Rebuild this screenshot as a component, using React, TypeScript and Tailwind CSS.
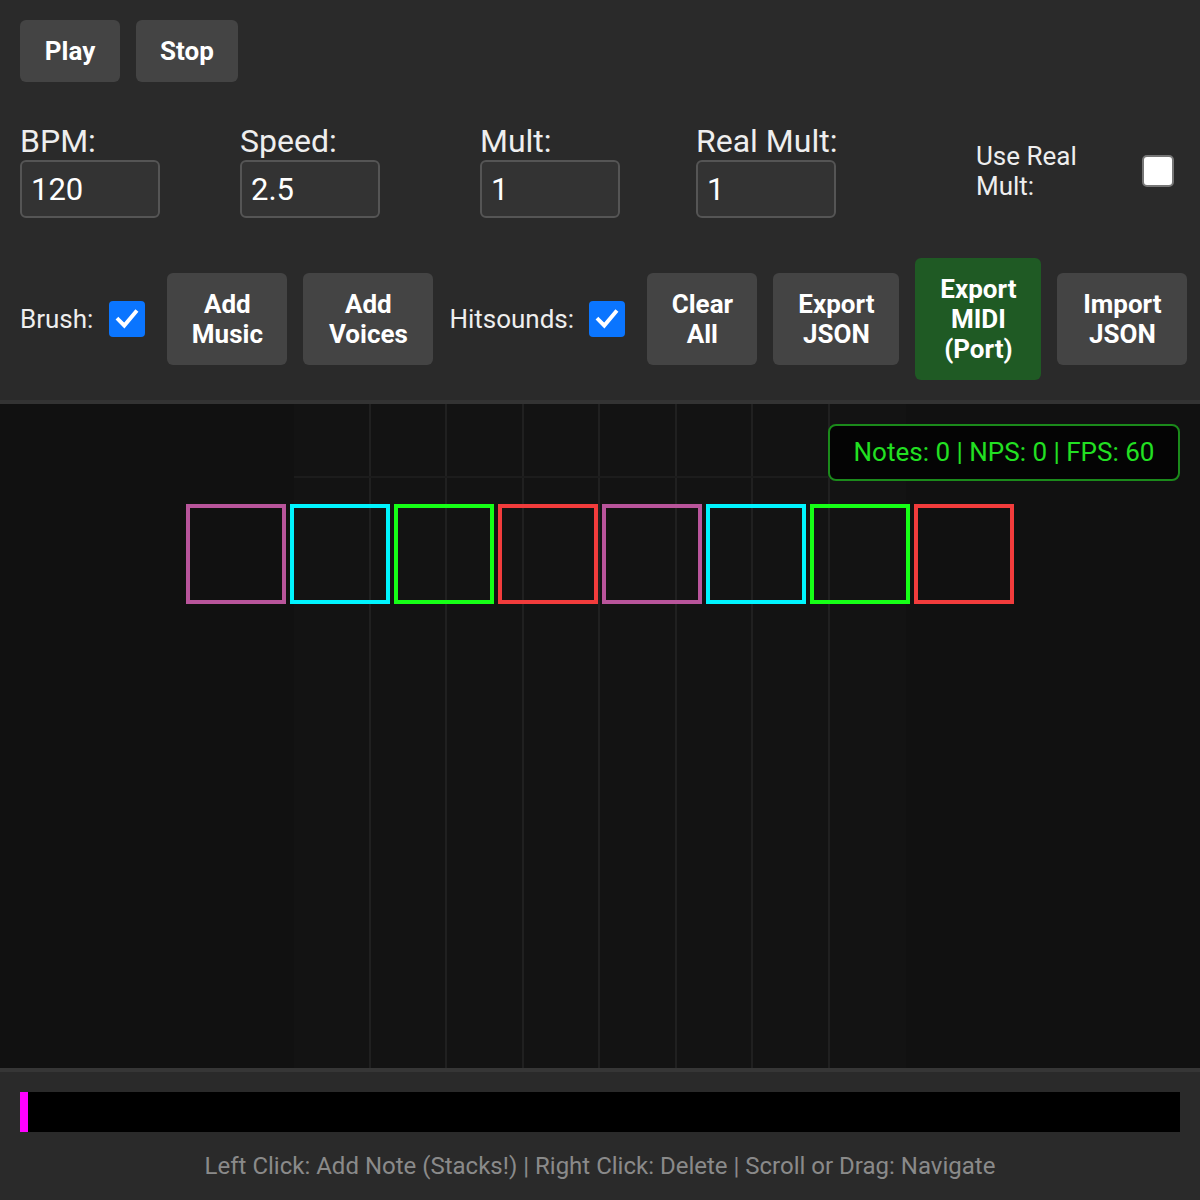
import React from "react";

const FONT = { fontFamily: "Roboto, 'Liberation Sans', sans-serif" };

const noteColors = ["#b9559b", "#00f5ff", "#16ff16", "#f23c3c", "#b9559b", "#00f5ff", "#16ff16", "#f23c3c"];

function CheckBox({ checked }: { checked: boolean }) {
  if (!checked) {
    return <div className="h-8 w-8 shrink-0 rounded-[5px] border-2 border-[#767676] bg-white" />;
  }
  return (
    <div className="mr-[6px] flex h-9 w-9 shrink-0 items-center justify-center rounded-[4px] bg-[#0a75ff]">
      <svg width="26" height="26" viewBox="0 0 24 24">
        <path d="M4 12.5 L9.5 18 L20 5.5" fill="none" stroke="white" strokeWidth="3.6" strokeLinecap="square" />
      </svg>
    </div>
  );
}

function Btn({ lines, width, green }: { lines: string[]; width: string; green?: boolean }) {
  return (
    <button
      className={
        (green ? "bg-[#1f5a24] " : "bg-[#444444] ") +
        width +
        " shrink-0 rounded-[6px] py-4 text-center text-[26px] font-bold leading-[30px] text-white"
      }
    >
      {lines.map((l) => (
        <span key={l} className="block whitespace-nowrap">
          {l}
        </span>
      ))}
    </button>
  );
}

function Field({ label, value, width }: { label: string; value: string; width: string }) {
  return (
    <div className={"flex shrink-0 flex-col " + width}>
      <label className="whitespace-nowrap text-[32px] leading-[38px] text-[#eeeeee]">{label}</label>
      <input
        readOnly
        value={value}
        className="h-[58px] w-[140px] rounded-[6px] border-2 border-[#555555] bg-[#333333] px-[9px] text-[31px] text-white outline-none"
      />
    </div>
  );
}

export default function App() {
  return (
    <div className="flex h-[1200px] w-[1200px] flex-col bg-[#111111]" style={FONT}>
      {/* controls */}
      <div className="flex h-[404px] shrink-0 flex-col gap-10 border-b-4 border-[#333333] bg-[#2a2a2a] p-5">
        <div className="flex gap-4">
          <button className="w-[100px] rounded-[6px] bg-[#444444] py-4 text-[26px] font-bold leading-[30px] text-white">Play</button>
          <button className="w-[102px] rounded-[6px] bg-[#444444] py-4 text-[26px] font-bold leading-[30px] text-white">Stop</button>
        </div>

        <div className="flex items-start">
          <Field label="BPM:" value="120" width="w-[220px]" />
          <Field label="Speed:" value="2.5" width="w-[240px]" />
          <Field label="Mult:" value="1" width="w-[216px]" />
          <Field label="Real Mult:" value="1" width="w-[280px]" />
          <div className="flex flex-1 items-center justify-between self-center pr-[6px] pt-[2px]">
            <span className="w-[120px] text-[26px] leading-[30px] text-[#eeeeee]">Use Real Mult:</span>
            <CheckBox checked={false} />
          </div>
        </div>

        <div className="flex items-center gap-4">
          <span className="w-[74px] text-[26px] text-[#eeeeee]">Brush:</span>
          <CheckBox checked />
          <Btn lines={["Add", "Music"]} width="w-[120px]" />
          <Btn lines={["Add", "Voices"]} width="w-[130px]" />
          <span className="w-[124px] text-[26px] text-[#eeeeee]">Hitsounds:</span>
          <CheckBox checked />
          <Btn lines={["Clear", "All"]} width="w-[110px]" />
          <Btn lines={["Export", "JSON"]} width="w-[126px]" />
          <Btn lines={["Export", "MIDI", "(Port)"]} width="w-[126px]" green />
          <Btn lines={["Import", "JSON"]} width="w-[130px]" />
        </div>
      </div>

      {/* canvas */}
      <div className="relative flex-1 overflow-hidden bg-[#111111]">
        <div className="absolute bottom-0 left-[294px] top-0 grid w-[612px] grid-cols-8 bg-[#131313]">
          {Array.from({ length: 8 }).map((_, i) => (
            <div key={i} className={i === 7 ? "" : "border-r-2 border-[#202020]"} />
          ))}
          <div className="absolute left-0 right-0 top-[72px] h-[2px] bg-[#1c1c1c]" />
        </div>

        <div className="relative flex gap-1 pl-[186px] pt-[100px]">
          {noteColors.map((c, i) => (
            <div key={i} className="h-[100px] w-[100px] border-4" style={{ borderColor: c }} />
          ))}
        </div>

        <div className="absolute right-5 top-5 flex h-[57px] w-[352px] items-center justify-center rounded-[8px] border-2 border-[#1b8a1b] bg-[#040404] text-[26px] text-[#22e022]">
          Notes: 0 | NPS: 0 | FPS: 60
        </div>
      </div>

      {/* footer */}
      <div className="flex h-[132px] shrink-0 flex-col border-t-4 border-[#363636] bg-[#2a2a2a] px-5 pt-5">
        <div className="flex h-10 bg-black">
          <div className="h-full w-2 bg-[#ff00ff]" />
        </div>
        <div className="mt-[19px] text-center text-[24px] leading-[30px] text-[#8a8a8a]">
          Left Click: Add Note (Stacks!) | Right Click: Delete | Scroll or Drag: Navigate
        </div>
      </div>
    </div>
  );
}
